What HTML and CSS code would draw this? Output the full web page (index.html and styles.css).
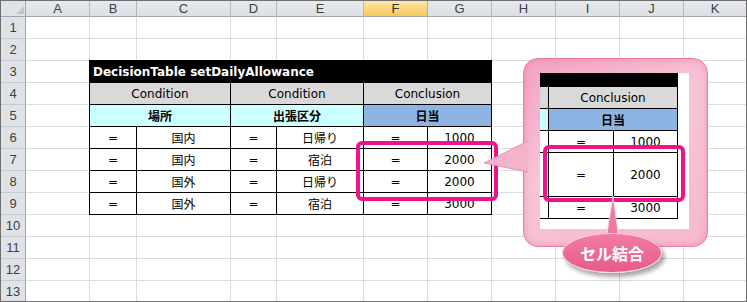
FILE: index.html
```html
<!DOCTYPE html>
<html lang="ja">
<head>
    <meta charset="UTF-8">
    <meta name="viewport" content="width=device-width, initial-scale=1.0">
    <title>セル結合 - DecisionTable</title>
    <link rel="stylesheet" href="styles.css">
</head>
<body>
    <div class="sheet">
        <div class="corner"><svg width="24" height="15"><polygon points="23,5 23,13 15,13" fill="#c2c7cd"/></svg></div>
        <div class="ch">A</div><div class="ch">B</div><div class="ch">C</div><div class="ch">D</div>
        <div class="ch">E</div><div class="ch active">F</div><div class="ch">G</div><div class="ch">H</div>
        <div class="ch">I</div><div class="ch">J</div><div class="ch">K</div>

        <div class="rh">1</div>
        <div class="c"></div><div class="c"></div><div class="c"></div><div class="c"></div><div class="c"></div><div class="c"></div>
        <div class="c"></div><div class="c"></div><div class="c"></div><div class="c"></div><div class="c"></div>
        <div class="rh">2</div>
        <div class="c"></div><div class="c"></div><div class="c"></div><div class="c"></div><div class="c"></div><div class="c"></div>
        <div class="c"></div><div class="c"></div><div class="c"></div><div class="c"></div><div class="c"></div>

        <!-- rows 3-9: columns B-G are taken by the decision table -->
        <div class="rh">3</div><div class="c"></div><div class="c"></div><div class="c"></div><div class="c"></div><div class="c"></div>
        <div class="rh">4</div><div class="c"></div><div class="c"></div><div class="c"></div><div class="c"></div><div class="c"></div>
        <div class="rh">5</div><div class="c"></div><div class="c"></div><div class="c"></div><div class="c"></div><div class="c"></div>
        <div class="rh">6</div><div class="c"></div><div class="c"></div><div class="c"></div><div class="c"></div><div class="c"></div>
        <div class="rh">7</div><div class="c"></div><div class="c"></div><div class="c"></div><div class="c"></div><div class="c"></div>
        <div class="rh">8</div><div class="c"></div><div class="c"></div><div class="c"></div><div class="c"></div><div class="c"></div>
        <div class="rh">9</div><div class="c"></div><div class="c"></div><div class="c"></div><div class="c"></div><div class="c"></div>

        <div class="rh">10</div>
        <div class="c"></div><div class="c"></div><div class="c"></div><div class="c"></div><div class="c"></div><div class="c"></div>
        <div class="c"></div><div class="c"></div><div class="c"></div><div class="c"></div><div class="c"></div>
        <div class="rh">11</div>
        <div class="c"></div><div class="c"></div><div class="c"></div><div class="c"></div><div class="c"></div><div class="c"></div>
        <div class="c"></div><div class="c"></div><div class="c"></div><div class="c"></div><div class="c"></div>
        <div class="rh">12</div>
        <div class="c"></div><div class="c"></div><div class="c"></div><div class="c"></div><div class="c"></div><div class="c"></div>
        <div class="c"></div><div class="c"></div><div class="c"></div><div class="c"></div><div class="c"></div>
        <div class="rh">13</div>
        <div class="c"></div><div class="c"></div><div class="c"></div><div class="c"></div><div class="c"></div><div class="c"></div>
        <div class="c"></div><div class="c"></div><div class="c"></div><div class="c"></div><div class="c"></div>

        <div class="decision">
            <div class="title">DecisionTable setDailyAllowance</div>
            <div class="span2 gray">Condition</div>
            <div class="span2 gray">Condition</div>
            <div class="span2 gray">Conclusion</div>
            <div class="span2 cyan">場所</div>
            <div class="span2 cyan">出張区分</div>
            <div class="span2 blue">日当</div>
            <div>=</div><div>国内</div><div>=</div><div>日帰り</div><div>=</div><div>1000</div>
            <div>=</div><div>国内</div><div>=</div><div>宿泊</div><div>=</div><div>2000</div>
            <div>=</div><div>国外</div><div>=</div><div>日帰り</div><div>=</div><div>2000</div>
            <div>=</div><div>国外</div><div>=</div><div>宿泊</div><div>=</div><div>3000</div>
        </div>

        <div class="mark mark-sheet"></div>

        <div class="callout">
            <div class="zoom-view">
                <div class="zv-title"></div><div></div>
                <div class="zv-edge gray"></div><div class="zv-cell span2 gray">Conclusion</div><div></div>
                <div class="zv-edge cyan"></div><div class="zv-cell span2 blue">日当</div><div></div>
                <div class="zv-edge"></div><div class="zv-cell">=</div><div class="zv-cell">1000</div><div></div>
                <div class="zv-edge"></div><div class="zv-cell">=</div><div class="zv-cell">2000</div><div></div>
                <div class="zv-edge"></div><div class="zv-cell">=</div><div class="zv-cell">3000</div><div></div>
                <div class="zv-rest"></div>
                <div class="mark mark-zoom"></div>
            </div>
        </div>

        <svg class="pointer" width="48" height="34">
            <polygon points="2,23 46,1 46,32" fill="#f5b2cb"/>
            <polyline points="46,1 2,23 46,32" fill="none" stroke="#ef8db3" stroke-width="1"/>
        </svg>

        <svg class="tail" width="24" height="46">
            <polygon points="13,1 6,44 19,44" fill="#ee7aa3" stroke="#fbd5e3" stroke-width="1"/>
        </svg>
        <div class="label">セル結合</div>
    </div>
</body>
</html>
```

FILE: styles.css
```css
body {
    margin: 0;
    background: #fff;
}

.sheet {
    position: relative;
    display: grid;
    grid-template-columns: 25px 64px 47px 94px 46px 87px 64px 64px 64px 64px 64px 63px;
    grid-template-rows: 16px repeat(12, 22px) 21px;
    width: 747px;
    height: 302px;
    box-sizing: border-box;
    border: 1px solid #6f6f6f;
    overflow: hidden;
    font-family: "DejaVu Sans", "Noto Sans CJK JP", sans-serif;
    font-size: 12px;
    color: #000;
}

.sheet div {
    box-sizing: border-box;
}

/* headers */
.corner {
    background: #dfe3e8;
    border-right: 1px solid #9ea6b0;
    border-bottom: 1px solid #9ea6b0;
}

.corner svg {
    display: block;
}

.ch {
    background: linear-gradient(#e6e9ed, #dce0e5);
    border-right: 1px solid #b3bac3;
    border-bottom: 1px solid #9ea6b0;
    font-family: "Liberation Sans", sans-serif;
    font-size: 13px;
    line-height: 15px;
    text-align: center;
    color: #3c3f45;
}

.ch.active {
    background: linear-gradient(#fde7a9, #f7c95d);
    border-right-color: #e3aa45;
    color: #333;
}

.rh {
    background: #dfe3e8;
    border-right: 1px solid #9ea6b0;
    border-bottom: 1px solid #c6cbd1;
    font-family: "Liberation Sans", sans-serif;
    font-size: 13px;
    line-height: 21px;
    text-align: center;
    color: #3c3f45;
}

.c {
    border-right: 1px solid #dadcdd;
    border-bottom: 1px solid #dadcdd;
}

/* decision table */
.decision {
    grid-column: 3 / 9;
    grid-row: 4 / 11;
    margin: -1px 0 0 -1px;
    display: grid;
    grid-template-columns: 47px 94px 46px 87px 64px 64px;
    grid-template-rows: repeat(7, 22px);
    border-left: 1px solid #000;
    border-top: 1px solid #000;
    background: #fff;
}

.decision > div {
    display: flex;
    align-items: center;
    justify-content: center;
    border-right: 1px solid #000;
    border-bottom: 1px solid #000;
}

.decision .title {
    grid-column: span 6;
    justify-content: flex-start;
    padding-left: 3px;
    background: #000;
    color: #fff;
    font-weight: bold;
}

.span2 {
    grid-column: span 2;
}

.gray {
    background: #d9d9d9;
}

.cyan {
    background: #ccffff;
    font-weight: bold;
}

.blue {
    background: #8db4e2;
    font-weight: bold;
}

/* magenta frames */
.mark {
    position: absolute;
    border: 4px solid #f0128b;
    border-radius: 6px;
}

.mark-sheet {
    left: 355px;
    top: 140px;
    width: 142px;
    height: 60px;
}

.mark-zoom {
    left: 3px;
    top: 72px;
    width: 142px;
    height: 57px;
}

/* zoom callout */
.callout {
    position: absolute;
    left: 522px;
    top: 57px;
    width: 185px;
    height: 189px;
    padding: 14px 18px 17px 16px;
    border: 1px solid #ec7aa8;
    border-radius: 15px;
    background: linear-gradient(150deg, #f3a2c2 0%, #f8c4d8 45%, #f6b9cf 100%);
    box-shadow: inset 0 0 7px rgba(236, 110, 160, 0.55);
}

.zoom-view {
    position: relative;
    display: grid;
    grid-template-columns: 9px 65px 64px 11px;
    grid-template-rows: 14px 22px 22px 22px 44px 22px 10px;
    background: #fff;
}

.zv-title {
    grid-column: span 3;
    background: #000;
}

.zv-edge {
    border-right: 1px solid #000;
    border-bottom: 1px solid #000;
}

.zv-cell {
    display: flex;
    align-items: center;
    justify-content: center;
    border-right: 1px solid #000;
    border-bottom: 1px solid #000;
}

.zv-rest {
    grid-column: span 4;
}

.pointer {
    position: absolute;
    left: 481px;
    top: 139px;
}

.tail {
    position: absolute;
    left: 599px;
    top: 194px;
}

.label {
    position: absolute;
    left: 561px;
    top: 232px;
    width: 100px;
    height: 40px;
    border: 1px solid #fbd0df;
    border-radius: 50%;
    background: linear-gradient(#f07ca4, #e75b8b);
    box-shadow: 3px 4px 4px rgba(0, 0, 0, 0.35);
    display: flex;
    align-items: center;
    justify-content: center;
    font-family: "Noto Sans CJK JP", sans-serif;
    font-size: 16px;
    font-weight: bold;
    color: #fff;
}
```
